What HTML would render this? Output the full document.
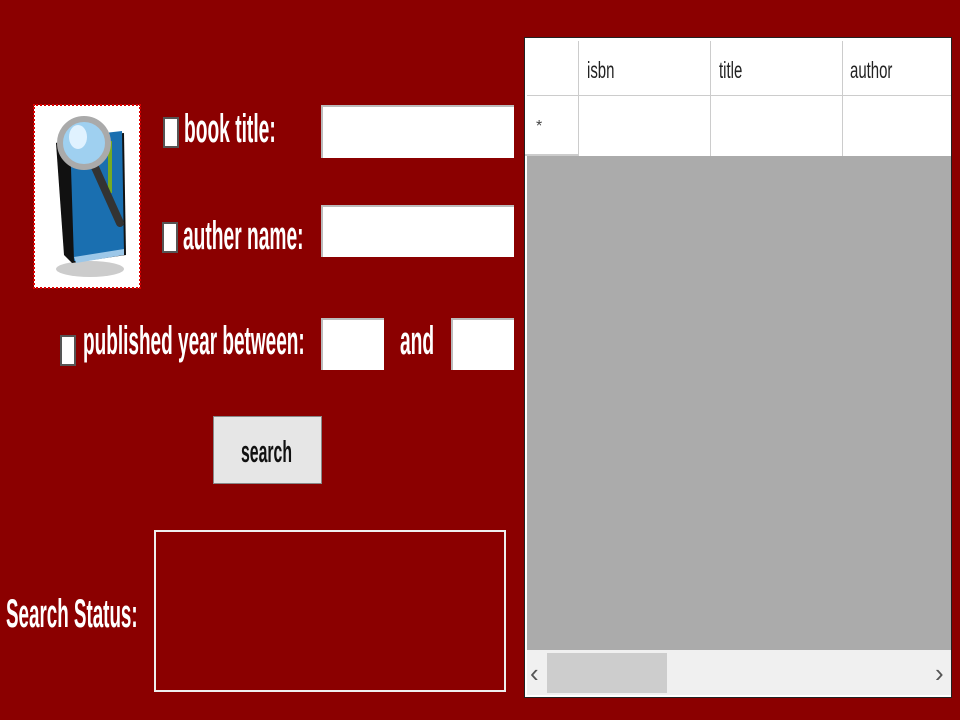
<!DOCTYPE html>
<html><head><meta charset="utf-8"><style>
body{margin:0;width:960px;height:720px;background:#8b0000;position:relative;overflow:hidden;font-family:"Liberation Sans",sans-serif}
.a{position:absolute}
.lbl{position:absolute;color:#fff;font-weight:bold;font-size:40px;line-height:40px;white-space:nowrap;transform:scaleX(0.48);transform-origin:left top}
.inp{position:absolute;background:#fff;border-top:2px solid #bbb;border-left:2px solid #bbb;box-sizing:border-box}
.cb{position:absolute;width:16px;height:31px;background:#fff;border:2px solid #555;box-sizing:border-box}
</style></head><body>
<div class="a" style="left:34px;top:105px;width:106px;height:183px;background:#fff;outline:2px dotted #d00;outline-offset:-1px">
<svg width="106" height="183" viewBox="0 0 106 183">
<ellipse cx="56" cy="164" rx="34" ry="8" fill="#ccc"/>
<polygon points="22,38 36,32 90,28 92,150 38,158 30,150" fill="#111"/>
<polygon points="36,32 88,26 90,148 40,156" fill="#1a6fb0"/>
<polygon points="40,152 90,144 90,150 42,158" fill="#9cc7e8"/>
<rect x="74" y="36" width="4" height="52" fill="#7a2"/>
<line x1="60" y1="60" x2="86" y2="118" stroke="#333" stroke-width="8" stroke-linecap="round"/>
<circle cx="50" cy="38" r="24" fill="#9fd0f0" stroke="#aaa" stroke-width="6"/>
<ellipse cx="44" cy="32" rx="9" ry="12" fill="#e0f2ff"/>
</svg></div>
<div class="cb" style="left:163px;top:117px"></div>
<div class="lbl" style="left:184px;top:109px">book title:</div>
<div class="inp" style="left:321px;top:105px;width:193px;height:53px"></div>
<div class="cb" style="left:162px;top:222px"></div>
<div class="lbl" style="left:183px;top:216px">auther name:</div>
<div class="inp" style="left:321px;top:205px;width:193px;height:52px"></div>
<div class="cb" style="left:60px;top:335px"></div>
<div class="lbl" style="left:83px;top:321px;transform:scaleX(0.475)">published year between:</div>
<div class="inp" style="left:321px;top:318px;width:63px;height:52px"></div>
<div class="lbl" style="left:400px;top:321px">and</div>
<div class="inp" style="left:451px;top:318px;width:63px;height:52px"></div>
<div class="a" style="left:213px;top:416px;width:109px;height:68px;background:#e6e6e6;border:1px solid #888;box-sizing:border-box"></div>
<div class="lbl" style="left:241px;top:436px;color:#111;font-size:31px;line-height:31px;transform:scaleX(0.51)">search</div>
<div class="a" style="left:154px;top:530px;width:352px;height:162px;border:2px solid #eee;box-sizing:border-box"></div>
<div class="lbl" style="left:6px;top:594px;transform:scaleX(0.47)">Search Status:</div>
<div class="a" style="left:524px;top:37px;width:428px;height:661px;background:#fff;border:1px solid #222;box-sizing:border-box">
 <div class="a" style="left:2px;top:118px;width:424px;height:494px;background:#ababab"></div>
 <div class="a" style="left:2px;top:57px;width:424px;height:1px;background:#ccc"></div>
 <div class="a" style="left:53px;top:3px;width:1px;height:115px;background:#ccc"></div>
 <div class="a" style="left:185px;top:3px;width:1px;height:115px;background:#ccc"></div>
 <div class="a" style="left:317px;top:3px;width:1px;height:115px;background:#ccc"></div>
 <div class="a" style="left:0;top:116px;width:53px;height:2px;background:#ccc"></div>
 <div class="a" style="left:62px;top:19px;font-size:23px;color:#222;transform:scaleX(0.65);transform-origin:left top">isbn</div>
 <div class="a" style="left:194px;top:19px;font-size:23px;color:#222;transform:scaleX(0.65);transform-origin:left top">title</div>
 <div class="a" style="left:325px;top:19px;font-size:23px;color:#222;transform:scaleX(0.65);transform-origin:left top">author</div>
 <div class="a" style="left:11px;top:80px;font-size:16px;color:#444">*</div>
 <div class="a" style="left:2px;top:612px;width:424px;height:45px;background:#f0f0f0"></div>
 <div class="a" style="left:22px;top:615px;width:120px;height:40px;background:#cdcdcd"></div>
 <div class="a" style="left:5px;top:620px;font-size:26px;color:#555">‹</div>
 <div class="a" style="left:410px;top:620px;font-size:26px;color:#555">›</div>
</div>
</body></html>
